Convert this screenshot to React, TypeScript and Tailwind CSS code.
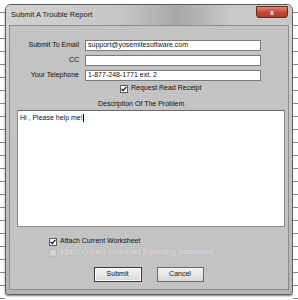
import React from "react";

const font = { fontFamily: '"Liberation Sans", Arial, sans-serif' };

function Strip() {
  const ys = [3, 16, 29, 42, 55, 68, 81, 94, 107, 120, 133, 146, 159, 172, 185, 198, 211, 224, 237, 250, 263, 276, 289];
  return (
    <div className="flex flex-col w-[5px] h-[300px] bg-white">
      {ys.map((y, i) => (
        <div key={i} className="h-[13px] border-b border-[#8a8a8a] shrink-0" />
      ))}
    </div>
  );
}

function Check({ checked, disabled }: { checked?: boolean; disabled?: boolean }) {
  return (
    <div
      className={
        "w-[8px] h-[8px] border flex items-center justify-center shrink-0 " +
        (disabled ? "border-[#b8b8b8] bg-[#d4d4d4]" : "border-[#5a5a5a] bg-white")
      }
    >
      {checked && (
        <svg width="6" height="6" viewBox="0 0 6 6">
          <path d="M0.6 2.8 L2.2 4.6 L5.4 0.8" stroke="#111" strokeWidth="1.3" fill="none" />
        </svg>
      )}
    </div>
  );
}

export default function App() {
  return (
    <div className="w-[298px] h-[300px] bg-white flex overflow-hidden" style={font}>
      <Strip />
      <div className="flex flex-col w-[288px] pt-[4px]">
        <div className="flex flex-col h-[291px] rounded-t-[6px] rounded-b-[3px] border border-[#5e5e5e] bg-gradient-to-b from-[#d6d6d6] via-[#c4c4c4] to-[#b4b4b4] px-[3px] pb-[4px] shadow-[0_1px_2px_rgba(0,0,0,0.5)]">
          <div className="h-[20px] flex items-center justify-between bg-[linear-gradient(90deg,#d2d2d2_0%,#c6c6c6_40%,#a8a8a8_60%,#cacaca_80%,#c8c8c8_100%)] -mx-[3px] px-[4px] rounded-t-[5px]">
            <span className="text-[7.5px] text-[#1a1a1a] pl-[1px]">Submit A Trouble Report</span>
            <div className="w-[32px] h-[12px] -mt-[6px] rounded-b-[3px] bg-gradient-to-b from-[#d98a7a] via-[#c04a35] to-[#b03a28] border border-[#6a2a20] flex items-center justify-center">
              <span className="text-[7px] font-bold text-white leading-none">x</span>
            </div>
          </div>
          <div className="flex-1 flex flex-col bg-[#c3c3c3] border border-[#8c8c8c] text-[7px] text-[#111]">
            <div className="grid grid-cols-[69px_176px] gap-x-[6px] gap-y-[4px] mt-[14px] items-center">
              <div className="text-right">Submit To Email</div>
              <div className="h-[11px] bg-white border border-[#7a7a7a] flex items-center pl-[2px]">support@yosemitesoftware.com</div>
              <div className="text-right">CC</div>
              <div className="h-[11px] bg-white border border-[#7a7a7a]" />
              <div className="text-right">Your Telephone</div>
              <div className="h-[11px] bg-white border border-[#7a7a7a] flex items-center pl-[2px]">1-877-248-1771 ext. 2</div>
            </div>
            <div className="flex items-center gap-[3px] ml-[110px] mt-[3px] h-[9px]">
              <Check checked />
              <span>Request Read Receipt</span>
            </div>
            <div className="ml-[88px] mt-[6px] h-[9px] leading-[9px]">Description Of The Problem</div>
            <div className="ml-[7px] w-[268px] h-[117px] mt-[2px] bg-white border border-[#8a8a8a] border-t-[#6a6a6a] px-[2px] pt-[2px]">
              Hi , Please help me!<span className="inline-block w-px h-[8px] bg-black align-middle" />
            </div>
            <div className="flex items-center gap-[3px] ml-[39px] mt-[10px] h-[9px]">
              <Check checked />
              <span>Attach Current Worksheet</span>
            </div>
            <div className="flex items-center gap-[3px] ml-[39px] mt-[2px] h-[9px]">
              <Check disabled />
              <span className="text-[#e6e6e6] [text-shadow:0_0_1px_#9a9a9a]">Attach Current Worksheet Supporting Documents</span>
            </div>
            <div className="flex justify-center gap-[15px] mt-[10px] pr-[1px]">
              <div className="w-[48px] h-[15px] border border-[#3a3a3a] bg-gradient-to-b from-[#f4f4f4] to-[#d8d8d8] flex items-center justify-center shadow-[inset_0_0_0_1px_#fff]">Submit</div>
              <div className="w-[47px] h-[15px] border border-[#6a6a6a] bg-gradient-to-b from-[#f4f4f4] to-[#d8d8d8] flex items-center justify-center">Cancel</div>
            </div>
          </div>
        </div>
      </div>
      <Strip />
    </div>
  );
}
